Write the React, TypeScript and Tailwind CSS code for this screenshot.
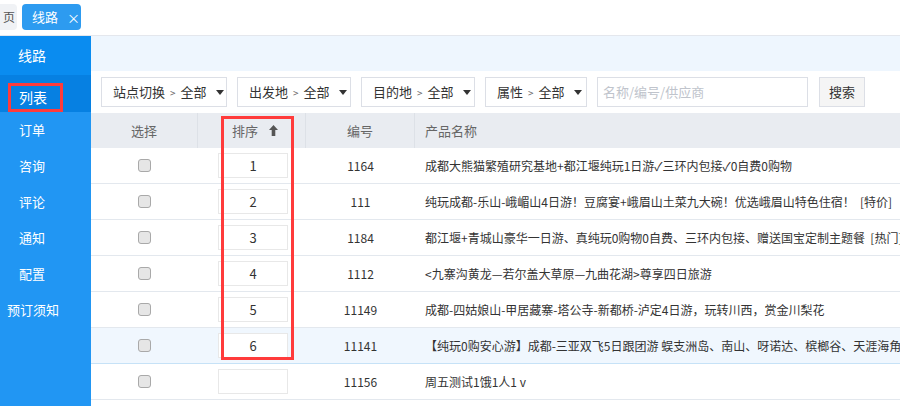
const MENU = ["订单", "咨询", "评论", "通知", "配置", "预订须知"];

const FILTERS = [
  { label: "站点切换", w: "w-[126px]" },
  { label: "出发地", w: "w-[114px]" },
  { label: "目的地", w: "w-[114px]" },
  { label: "属性", w: "w-[102px]" },
];

const ROWS = [
  { sort: "1", code: "1164", name: "成都大熊猫繁殖研究基地+都江堰纯玩1日游✓三环内包接✓0自费0购物" },
  { sort: "2", code: "111", name: "纯玩成都-乐山-峨嵋山4日游！豆腐宴+峨眉山土菜九大碗！优选峨眉山特色住宿！  [特价]" },
  { sort: "3", code: "1184", name: "都江堰+青城山豪华一日游、真纯玩0购物0自费、三环内包接、赠送国宝定制主题餐  [热门]" },
  { sort: "4", code: "1112", name: "<九寨沟黄龙—若尔盖大草原—九曲花湖>尊享四日旅游" },
  { sort: "5", code: "11149", name: "成都-四姑娘山-甲居藏寨-塔公寺-新都桥-泸定4日游，玩转川西，赏金川梨花" },
  { sort: "6", code: "11141", name: "【纯玩0购安心游】成都-三亚双飞5日跟团游 蜈支洲岛、南山、呀诺达、槟榔谷、天涯海角" },
  { sort: "", code: "11156", name: "周五测试1饿1人1 v" },
];

function Caret() {
  return <span className="ml-[9px] inline-block w-0 h-0 border-l-[4px] border-r-[4px] border-t-[5px] border-l-transparent border-r-transparent border-t-[#333]" />;
}

function Checkbox() {
  return <span className="inline-block w-[13px] h-[13px] rounded-[3px] border border-[#a9a9a9] bg-[#e6e6e6]" />;
}

export default function App() {
  return (
    <div className="w-[900px] h-[406px] overflow-hidden bg-white text-[13px] text-[#333]" style={{ fontFamily: '"Noto Sans CJK SC", "Liberation Sans", sans-serif' }}>
      {/* tabs */}
      <div className="h-[36px] flex items-start pt-[4px] border-b border-[#e4e7ed] bg-white">
        <div className="h-[26px] w-[17px] bg-[#f0f2f5] rounded-r-[4px] flex items-center justify-end pr-[2px] text-[12px] text-[#555]">页</div>
        <div className="ml-[5px] h-[26px] w-[59px] bg-[#2d9bf0] rounded-[4px] flex items-center pl-[10px] text-white text-[13px]">
          线路
          <span className="ml-[9px] text-[13px] leading-none">×</span>
        </div>
      </div>

      <div className="flex h-[370px]">
        {/* sidebar */}
        <div className="w-[91px] shrink-0 bg-[#2196f3] text-white text-[13px]">
          <div className="h-[39px] bg-[#0a8cf0] flex items-center pl-[18px] text-[14px]">线路</div>
          <div className="h-[37px] bg-[#0680e2] flex items-center pl-[8px]">
            <div className="w-[55px] h-[29px] mt-[8px] border-[3px] border-[#ff3b3b] flex items-center pl-[8px] text-[14px]">列表</div>
          </div>
          {MENU.map((m) => (
            <div key={m} className={`h-[36px] flex items-center ${m.length > 2 ? "pl-[7px]" : "pl-[19px]"}`}>{m}</div>
          ))}
        </div>

        {/* main */}
        <div className="relative flex-1 flex flex-col">
          <div className="h-[35px] bg-[#eef6fe]" />
          <div className="h-[42px] flex items-center pl-[10px] bg-white">
            {FILTERS.map((f) => (
              <div key={f.label} className={`${f.w} h-[30px] mr-[10px] border border-[#dcdfe6] flex items-center pl-[11px] text-[13px] text-[#333]`}>
                {f.label}
                <span className="mx-[5px] text-[10px] text-[#666]">&gt;</span>
                全部
                <Caret />
              </div>
            ))}
            <div className="w-[211px] h-[30px] border border-[#dcdfe6] flex items-center pl-[5px] text-[#c0c4cc]">名称/编号/供应商</div>
            <div className="ml-[11px] w-[46px] h-[30px] border border-[#dcdfe6] bg-[#f5f5f5] flex items-center justify-center">搜索</div>
          </div>

          {/* table */}
          <div className="flex h-[35px] bg-[#e9ecf1] text-[#666]">
            <div className="w-[107px] flex items-center justify-center border-r border-[#dde1e7]">选择</div>
            <div className="w-[108px] flex items-center pl-[34px] border-r border-[#dde1e7]">
              排序
              <svg viewBox="0 0 10 12" className="ml-[11px] w-[9px] h-[11px]">
                <path d="M5 0 L10 5.5 L7 5.5 L7 12 L3 12 L3 5.5 L0 5.5 Z" fill="#555" />
              </svg>
            </div>
            <div className="w-[109px] flex items-center justify-center border-r border-[#dde1e7]">编号</div>
            <div className="flex-1 flex items-center pl-[10px]">产品名称</div>
          </div>
          {ROWS.map((r, i) => (
            <div key={r.code} className={`flex h-[36px] border-b ${i === 5 ? "bg-[#f0f7fe] border-[#c6e2f7]" : "border-[#e3e8ee]"} ${i === 4 ? "border-[#c6e2f7]" : ""}`}>
              <div className="w-[107px] flex items-center justify-center"><Checkbox /></div>
              <div className="w-[108px] flex items-center pl-[20px]">
                <div className="w-[70px] h-[25px] bg-white border border-[#e8e8e8] flex items-center justify-center text-[#333]">{r.sort}</div>
              </div>
              <div className="w-[109px] flex items-center justify-center text-[12px] text-[#333]">{r.code}</div>
              <div className="flex-1 flex items-center pl-[10px] whitespace-pre overflow-hidden text-[12px] text-[#333]">{r.name}</div>
            </div>
          ))}

          {/* highlight around sort column */}
          <div className="absolute left-[130px] top-[80px] w-[73px] h-[244px] border-[3px] border-[#ff3b3b]" />
        </div>
      </div>
    </div>
  );
}
